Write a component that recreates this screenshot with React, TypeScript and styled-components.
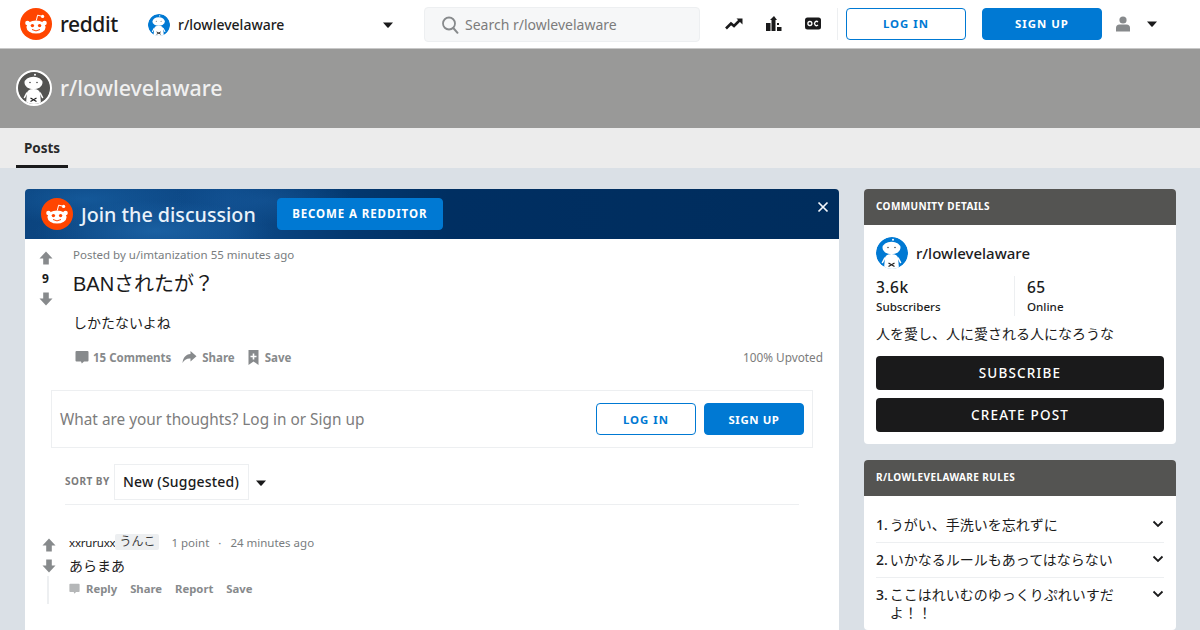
import * as React from 'react';
import styled, { createGlobalStyle } from 'styled-components';

const GlobalStyle = createGlobalStyle`
  html, body {
    margin: 0;
    height: 630px;
    overflow: hidden;
    background: #dae0e6;
    font-family: 'Noto Sans', 'Noto Sans CJK JP', sans-serif;
  }
  * { box-sizing: border-box; }
`;

const Header = styled.header`
  height: 49px;
  background: #fff;
  border-bottom: 1px solid #c8c8c8;
  display: flex;
  align-items: center;
  padding: 0 0 1px 20px;
`;
const Logo = styled.div`
  width: 128px;
  display: flex;
  align-items: center;
  gap: 8px;
`;
const Wordmark = styled.span`
  font-size: 21px;
  font-weight: 500;
  color: #1a1a1b;
  letter-spacing: -0.4px;
  line-height: 32px;
`;
const CommunityPicker = styled.div`
  width: 252px;
  display: flex;
  align-items: center;
  gap: 8px;
  padding: 2px 7px 0 0;
  font-size: 14px;
  font-weight: 500;
  color: #1c1c1c;
`;
const PickerCaret = styled.div`
  margin-left: auto;
  display: flex;
`;
const Search = styled.div`
  margin: 2px 0 0 24px;
  width: 276px;
  height: 35px;
  background: #f6f7f8;
  border: 1px solid #edeff1;
  border-radius: 4px;
  display: flex;
  align-items: center;
  gap: 6px;
  padding-left: 16px;
  font-size: 14px;
  color: #7c7c7c;
`;
const IconRow = styled.div`
  display: flex;
  align-items: center;
  gap: 23px;
  margin-left: 25px;
  padding-right: 16px;
  height: 32px;
  border-right: 1px solid #edeff1;
`;
const HeaderButtons = styled.div`
  display: flex;
  gap: 16px;
  margin-left: 8px;
`;
const Button = styled.button<{ $primary?: boolean; $w: number; $track?: number }>`
  width: ${(p) => p.$w}px;
  height: 32px;
  border-radius: 4px;
  border: 1px solid #0079d3;
  background: ${(p) => (p.$primary ? '#0079d3' : '#fff')};
  color: ${(p) => (p.$primary ? '#fff' : '#0079d3')};
  font-family: inherit;
  font-size: 11.4px;
  font-weight: 700;
  letter-spacing: ${(p) => p.$track ?? 1}px;
  padding: 0;
`;
const UserMenu = styled.div`
  display: flex;
  align-items: center;
  gap: 16px;
  margin-left: 13px;
`;

const Banner = styled.div`
  height: 79px;
  background: #999998;
  display: flex;
  align-items: center;
  gap: 8px;
  padding: 0 16px 2px;
`;
const BannerTitle = styled.h1`
  margin: 0;
  font-size: 21.4px;
  font-weight: 500;
  color: #f0f0f0;
`;
const AvatarRing = styled.div`
  width: 36px;
  height: 36px;
  border-radius: 50%;
  border: 2px solid #fff;
  display: flex;
  overflow: hidden;
`;
const Tabs = styled.nav`
  height: 40px;
  background: #ececec;
  padding-left: 16px;
`;
const Tab = styled.div`
  width: 52px;
  height: 40px;
  border-bottom: 3px solid #1a1a1b;
  font-size: 13.5px;
  font-weight: 700;
  color: #2a2a2a;
  text-align: center;
  line-height: 40px;
`;

const Content = styled.div`
  display: flex;
  align-items: flex-start;
  gap: 25px;
  padding: 21px 24px 0 25px;
`;
const Main = styled.main`
  width: 814px;
  flex: none;
`;
const JoinBar = styled.div`
  position: relative;
  height: 50px;
  border-radius: 4px 4px 0 0;
  background:
    radial-gradient(ellipse 120px 30px at 130px 42px, rgba(40, 120, 190, 0.5), transparent),
    radial-gradient(ellipse 100px 26px at 60px 10px, rgba(30, 110, 180, 0.45), transparent),
    radial-gradient(ellipse 90px 24px at 240px 12px, rgba(30, 100, 170, 0.35), transparent),
    linear-gradient(90deg, #0b447f 0%, #0e4b8a 25%, #03386f 40%, #002f62 52%, #002d5d 100%);
  display: flex;
  align-items: center;
  padding-left: 16px;
`;
const JoinText = styled.span`
  margin-left: 8px;
  font-size: 19.7px;
  font-weight: 500;
  color: #eaf2fa;
`;
const JoinButton = styled(Button)`
  margin-left: 21px;
  margin-top: -1px;
  font-size: 11.5px;
  letter-spacing: 0.9px;
`;
const CloseBtn = styled.div`
  position: absolute;
  right: 10px;
  top: 12px;
  display: flex;
`;
const Card = styled.div`
  background: #fff;
  height: 391px;
`;
const Post = styled.article`
  display: flex;
  padding-top: 8px;
`;
const VoteCol = styled.div`
  width: 48px;
  flex: none;
  display: flex;
  flex-direction: column;
  align-items: center;
  padding: 4px 7px 0 0;
`;
const Score = styled.div`
  font-size: 12px;
  font-weight: 700;
  line-height: 16px;
  margin: 6px 0 5px;
  color: #1a1a1b;
`;
const PostBody = styled.div`
  flex: 1;
  padding-right: 16px;
`;
const Meta = styled.div`
  font-size: 11.5px;
  line-height: 16px;
  color: #787c7e;
`;
const PostTitle = styled.h2`
  margin: 8px 0 0;
  font-family: 'Liberation Sans', 'Noto Sans CJK JP', sans-serif;
  font-size: 20px;
  font-weight: 400;
  line-height: 26px;
  color: #1a1a1b;
`;
const PostText = styled.p`
  margin: 15px 0 0;
  font-size: 14px;
  line-height: 21px;
  color: #1c1c1c;
`;
const ActionRow = styled.div`
  display: flex;
  align-items: center;
  height: 24px;
  margin-top: 12px;
  font-size: 11.5px;
  font-weight: 700;
  color: #878a8c;
`;
const Action = styled.span<{ $gap?: number; $after?: number }>`
  display: flex;
  align-items: center;
  gap: ${(p) => p.$gap ?? 5}px;
  margin-right: ${(p) => p.$after ?? 13}px;
`;
const CommentIconWrap = styled.span`
  display: flex;
  margin-left: 2px;
`;
const Upvoted = styled.span`
  margin-left: auto;
  font-weight: 400;
  font-size: 11.8px;
  color: #7c7c7c;
`;
const CommentBox = styled.div`
  margin: 21px 26px 0;
  height: 58px;
  border: 1px solid #edeff1;
  display: flex;
  align-items: center;
  gap: 8px;
  padding: 0 8px;
  font-size: 15.35px;
  color: #7c7c7c;
`;
const CommentPrompt = styled.span`
  margin-right: auto;
`;
const SortRow = styled.div`
  margin: 16px 40px 0;
  height: 41px;
  border-bottom: 1px solid #edeff1;
  display: flex;
  align-items: flex-start;
`;
const SortLabel = styled.span`
  width: 49px;
  font-size: 10px;
  font-weight: 700;
  letter-spacing: 0.5px;
  line-height: 34px;
  color: #7c7c7c;
`;
const SortSelect = styled.div`
  width: 135px;
  height: 36px;
  border: 1px solid #edeff1;
  padding-left: 8px;
  font-size: 14px;
  font-weight: 500;
  line-height: 34px;
  letter-spacing: 0.2px;
  color: #1a1a1b;
`;
const SortCaret = styled.div`
  display: flex;
  margin: 16px 0 0 7px;
`;
const Comment = styled.div`
  display: flex;
  margin-top: 29px;
`;
const CommentVotes = styled.div`
  width: 44px;
  flex: none;
  display: flex;
  flex-direction: column;
  align-items: center;
  gap: 7px;
  padding: 4px 0 0 3px;
`;
const Thread = styled.div`
  width: 2px;
  height: 28px;
  background: #edeff1;
  margin: -4px 0 0 -2px;
`;
const CommentMeta = styled.div`
  display: flex;
  align-items: center;
  height: 16px;
  font-size: 11.5px;
  color: #787c7e;
`;
const Author = styled.span`
  color: #1c1c1c;
  letter-spacing: -0.2px;
`;
const Flair = styled.span`
  background: #edeff1;
  border-radius: 2px;
  padding: 0 4px;
  margin-right: 12px;
  font-size: 12px;
  line-height: 16px;
  color: #3c3c3c;
`;
const Dot = styled.span`
  margin: 0 9px;
`;
const CommentBody = styled.div`
  margin-top: 5px;
  font-size: 14px;
  line-height: 21px;
  color: #1c1c1c;
`;
const CommentActions = styled.div`
  display: flex;
  align-items: center;
  gap: 13px;
  margin-top: 4px;
  height: 16px;
  font-size: 11.3px;
  font-weight: 700;
  color: #878a8c;
`;
const ReplyAction = styled.span`
  display: flex;
  align-items: center;
  gap: 6px;
`;

const Sidebar = styled.aside`
  width: 312px;
  flex: none;
  display: flex;
  flex-direction: column;
  gap: 16px;
`;
const Widget = styled.section`
  background: #fff;
  border-radius: 4px;
  overflow: hidden;
`;
const WidgetHead = styled.div`
  height: 36px;
  background: #545452;
  padding-left: 12px;
  font-size: 10px;
  font-weight: 700;
  letter-spacing: 0.4px;
  line-height: 35px;
  color: #fff;
`;
const WidgetBody = styled.div`
  padding: 12px;
`;
const Identity = styled.div`
  display: flex;
  align-items: center;
  gap: 8px;
  font-size: 15px;
  font-weight: 500;
  color: #1c1c1c;
`;
const RoundClip = styled.div<{ $size: number }>`
  display: flex;
  width: ${(p) => p.$size}px;
  height: ${(p) => p.$size}px;
  border-radius: 50%;
  overflow: hidden;
`;
const Stats = styled.div`
  display: flex;
  margin-top: 7px;
`;
const Stat = styled.div<{ $split?: boolean }>`
  width: ${(p) => (p.$split ? '139px' : 'auto')};
  border-right: ${(p) => (p.$split ? '1px solid #edeff1' : 'none')};
  margin-right: 12px;
`;
const StatValue = styled.div`
  font-size: 15.5px;
  font-weight: 500;
  letter-spacing: 0.5px;
  line-height: 22px;
  color: #1c1c1c;
`;
const StatLabel = styled.div`
  font-size: 11.6px;
  font-weight: 500;
  line-height: 18px;
  color: #1c1c1c;
`;
const Description = styled.p`
  margin: 7px 0 0;
  font-size: 14px;
  line-height: 21px;
  color: #1c1c1c;
`;
const DarkButton = styled.button`
  display: block;
  width: 288px;
  height: 34px;
  margin-top: 8px;
  border: none;
  border-radius: 4px;
  background: #1a1a1b;
  color: #fff;
  font-family: inherit;
  font-size: 13.5px;
  font-weight: 500;
  letter-spacing: 1.2px;
  &:first-of-type { margin-top: 12px; }
`;
const Rules = styled.ol`
  list-style: none;
  margin: 0;
  padding: 12px 12px 0;
`;
const Rule = styled.li`
  display: flex;
  padding: 8px 0;
  border-bottom: 1px solid #edeff1;
  font-size: 14px;
  line-height: 18px;
  color: #1c1c1c;
  &:last-child { border-bottom: none; }
`;
const RuleNum = styled.span`
  font-weight: 500;
  flex: none;
  margin-right: 2px;
`;
const RuleText = styled.span`
  flex: 1;
  padding-right: 32px;
`;
const Chevron = styled.div`
  flex: none;
  display: flex;
  margin-top: 4px;
  height: 8px;
`;

const Snoo = ({ size, bg }: { size: number; bg: string }) => (
  <svg width={size} height={size} viewBox="0 0 32 32">
    <circle cx="16" cy="16" r="16" fill={bg} />
    <circle cx="17" cy="2.800" r="1" fill="#fff" />
    <ellipse cx="15.500" cy="11" rx="9" ry="6.200" fill="#fff" />
    <circle cx="12" cy="10.500" r=".7" fill="#222" />
    <circle cx="19" cy="10.500" r=".7" fill="#222" />
    <path d="M8 32l.8-10q.4-5 6.700-5t6.700 5l.8 10z" fill="#fff" />
    <path d="M8.800 21L6.500 25.500M22.200 21l2.300 4.500" stroke="#fff" strokeWidth="1.600" strokeLinecap="round" />
    <path d="M12.500 26l6 3.500M18.500 26l-6 3.500" stroke="#222" strokeWidth="1.300" />
  </svg>
);

const RedditMark = ({ size }: { size: number }) => (
  <svg width={size} height={size} viewBox="0 0 32 32">
    <circle cx="16" cy="16" r="16" fill="#ff4500" />
    <circle cx="7.500" cy="15" r="2.300" fill="#fff" />
    <circle cx="24.500" cy="15" r="2.300" fill="#fff" />
    <ellipse cx="16" cy="19" rx="9.600" ry="6.600" fill="#fff" />
    <path d="M16.300 12.500l1.300-5.300 4.200 1" stroke="#fff" strokeWidth="1" fill="none" />
    <circle cx="22.600" cy="8.400" r="1.600" fill="#fff" />
    <circle cx="12.400" cy="17.600" r="1.700" fill="#ff4500" />
    <circle cx="19.600" cy="17.600" r="1.700" fill="#ff4500" />
    <path d="M12 21.500q4 2.800 8 0" stroke="#ff4500" strokeWidth="1" fill="none" />
  </svg>
);

const Caret = () => (
  <svg width="10" height="6" viewBox="0 0 10 6">
    <path d="M0 .5h10L5.600 5.600q-.6.5-1.200 0z" fill="#1a1a1b" />
  </svg>
);

const Arrow = ({ down }: { down?: boolean }) => (
  <svg width="14" height="14" viewBox="0 0 14 14" style={{ transform: down ? 'rotate(180deg)' : undefined }}>
    <path d="M7 0.500L13.500 7.500H9.800V13.500H4.200V7.500H.5z" fill="#878a8c" />
  </svg>
);

const BubbleIcon = ({ color, size = 14 }: { color: string; size?: number }) => (
  <svg width={size} height={size} viewBox="0 0 14 14">
    <path d="M1.500 1h11q1 0 1 1v8.500q0 1-1 1H9L6.800 13.600 6 11.500H1.500q-1 0-1-1V2q0-1 1-1z" fill={color} />
  </svg>
);

const ShareIcon = () => (
  <svg width="15" height="14" viewBox="0 0 15 14">
    <path d="M8.500 1l6 5.300-6 5.200V8.400C4.500 8.200 2.400 9.700 .5 13 1 8 3.500 4.300 8.500 4z" fill="#878a8c" />
  </svg>
);

const SaveIcon = () => (
  <svg width="11" height="15" viewBox="0 0 11 15">
    <path d="M.5 0h10v15L5.500 11.500.5 15zM4.700 3.500v2.300H2.500v1.500h2.200v2.200h1.600V7.300h2.200V5.800H6.300V3.500z" fill="#878a8c" fillRule="evenodd" />
  </svg>
);

const SearchIcon = () => (
  <svg width="18" height="18" viewBox="0 0 18 18">
    <circle cx="8" cy="7.500" r="6" fill="none" stroke="#878a8c" strokeWidth="1.800" />
    <path d="M12.300 12l4.200 4.800" stroke="#878a8c" strokeWidth="2" strokeLinecap="round" />
  </svg>
);

const TrendIcon = () => (
  <svg width="18" height="12" viewBox="0 0 18 12">
    <path d="M1 10.500l5-5 3 2.500 6-6" fill="none" stroke="#1a1a1b" strokeWidth="2.600" />
    <path d="M11.500 .5h6v6z" fill="#1a1a1b" />
  </svg>
);

const ChartIcon = () => (
  <svg width="16" height="15" viewBox="0 0 16 15">
    <path d="M0 7h4.500v8H0zM5.500 4H4l4-4 3 4H9.500v11h-4zM11 11h4.500v4H11z" fill="#1a1a1b" />
    <path d="M11 7h2v2h-2z" fill="#1a1a1b" />
  </svg>
);

const OcIcon = () => (
  <svg width="16" height="13" viewBox="0 0 16 13">
    <rect x="0" y="0.500" width="16" height="12" rx="2.500" fill="#1a1a1b" />
    <circle cx="4.900" cy="6.500" r="2" fill="none" stroke="#fff" strokeWidth="1.300" />
    <path d="M13 4.900a2.100 2.100 0 1 0 0 3.200" fill="none" stroke="#fff" strokeWidth="1.300" />
  </svg>
);

const UserIcon = () => (
  <svg width="16" height="16" viewBox="0 0 16 16">
    <circle cx="8" cy="4" r="3.600" fill="#878a8c" />
    <path d="M1 15.500v-3.500q0-3.500 3.500-3.500h7q3.500 0 3.500 3.500v3.500z" fill="#878a8c" />
  </svg>
);

const CloseIcon = () => (
  <svg width="12" height="12" viewBox="0 0 12 12">
    <path d="M1.500 1.500l9 9M10.500 1.500l-9 9" stroke="#f4f8fc" strokeWidth="1.700" />
  </svg>
);

const ChevronIcon = () => (
  <svg width="12" height="8" viewBox="0 0 12 8">
    <path d="M1.500 1.500L6 6l4.500-4.500" fill="none" stroke="#1a1a1b" strokeWidth="1.800" />
  </svg>
);

const rules = [
  'うがい、手洗いを忘れずに',
  'いかなるルールもあってはならない',
  'ここはれいむのゆっくりぷれいすだよ！！',
];

export default function App() {
  return (
    <>
      <GlobalStyle />
      <Header>
        <Logo>
          <RedditMark size={32} />
          <Wordmark>reddit</Wordmark>
        </Logo>
        <CommunityPicker>
          <RoundClip $size={22}>
            <Snoo size={22} bg="#0079d3" />
          </RoundClip>
          r/lowlevelaware
          <PickerCaret>
            <Caret />
          </PickerCaret>
        </CommunityPicker>
        <Search>
          <SearchIcon />
          Search r/lowlevelaware
        </Search>
        <IconRow>
          <TrendIcon />
          <ChartIcon />
          <OcIcon />
        </IconRow>
        <HeaderButtons>
          <Button $w={120}>LOG IN</Button>
          <Button $w={120} $primary>SIGN UP</Button>
        </HeaderButtons>
        <UserMenu>
          <UserIcon />
          <Caret />
        </UserMenu>
      </Header>

      <Banner>
        <AvatarRing>
          <Snoo size={32} bg="#545452" />
        </AvatarRing>
        <BannerTitle>r/lowlevelaware</BannerTitle>
      </Banner>
      <Tabs>
        <Tab>Posts</Tab>
      </Tabs>

      <Content>
        <Main>
          <JoinBar>
            <RedditMark size={32} />
            <JoinText>Join the discussion</JoinText>
            <JoinButton $w={166} $primary>BECOME A REDDITOR</JoinButton>
            <CloseBtn>
              <CloseIcon />
            </CloseBtn>
          </JoinBar>
          <Card>
            <Post>
              <VoteCol>
                <Arrow />
                <Score>9</Score>
                <Arrow down />
              </VoteCol>
              <PostBody>
                <Meta>Posted by u/imtanization 55 minutes ago</Meta>
                <PostTitle>BANされたが？</PostTitle>
                <PostText>しかたないよね</PostText>
                <ActionRow>
                  <Action $gap={4} $after={11}>
                    <CommentIconWrap>
                      <BubbleIcon color="#878a8c" />
                    </CommentIconWrap>
                    15 Comments
                  </Action>
                  <Action>
                    <ShareIcon />
                    Share
                  </Action>
                  <Action $gap={6}>
                    <SaveIcon />
                    Save
                  </Action>
                  <Upvoted>100% Upvoted</Upvoted>
                </ActionRow>
              </PostBody>
            </Post>
            <CommentBox>
              <CommentPrompt>What are your thoughts? Log in or Sign up</CommentPrompt>
              <Button $w={100}>LOG IN</Button>
              <Button $w={100} $primary $track={0.6}>SIGN UP</Button>
            </CommentBox>
            <SortRow>
              <SortLabel>SORT BY</SortLabel>
              <SortSelect>New (Suggested)</SortSelect>
              <SortCaret>
                <Caret />
              </SortCaret>
            </SortRow>
            <Comment>
              <CommentVotes>
                <Arrow />
                <Arrow down />
                <Thread />
              </CommentVotes>
              <div>
                <CommentMeta>
                  <Author>xxruruxx</Author>
                  <Flair>うんこ</Flair>
                  1 point<Dot>·</Dot>24 minutes ago
                </CommentMeta>
                <CommentBody>あらまあ</CommentBody>
                <CommentActions>
                  <ReplyAction>
                    <BubbleIcon color="#b5b7b8" size={11} />
                    Reply
                  </ReplyAction>
                  <span>Share</span>
                  <span>Report</span>
                  <span>Save</span>
                </CommentActions>
              </div>
            </Comment>
          </Card>
        </Main>

        <Sidebar>
          <Widget>
            <WidgetHead>COMMUNITY DETAILS</WidgetHead>
            <WidgetBody>
              <Identity>
                <RoundClip $size={32}>
                  <Snoo size={32} bg="#0079d3" />
                </RoundClip>
                r/lowlevelaware
              </Identity>
              <Stats>
                <Stat $split>
                  <StatValue>3.6k</StatValue>
                  <StatLabel>Subscribers</StatLabel>
                </Stat>
                <Stat>
                  <StatValue>65</StatValue>
                  <StatLabel>Online</StatLabel>
                </Stat>
              </Stats>
              <Description>人を愛し、人に愛される人になろうな</Description>
              <DarkButton>SUBSCRIBE</DarkButton>
              <DarkButton>CREATE POST</DarkButton>
            </WidgetBody>
          </Widget>
          <Widget>
            <WidgetHead>R/LOWLEVELAWARE RULES</WidgetHead>
            <Rules>
              {rules.map((rule, i) => (
                <Rule key={rule}>
                  <RuleNum>{i + 1}.</RuleNum>
                  <RuleText>{rule}</RuleText>
                  <Chevron>
                    <ChevronIcon />
                  </Chevron>
                </Rule>
              ))}
            </Rules>
          </Widget>
        </Sidebar>
      </Content>
    </>
  );
}
